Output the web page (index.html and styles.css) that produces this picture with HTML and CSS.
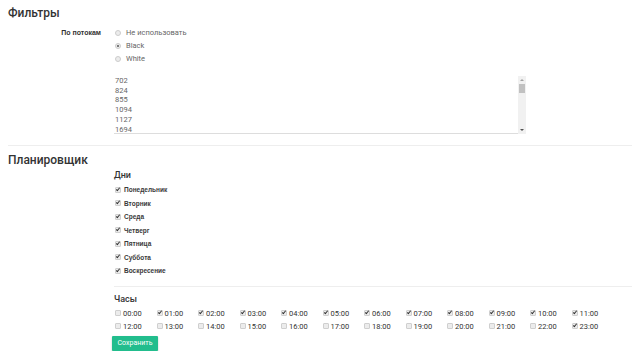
FILE: index.html
```html
<!DOCTYPE html>
<html lang="ru">
  <head>
    <meta charset="UTF-8" />
    <meta name="viewport" content="width=device-width, initial-scale=1.0" />
    <title>Настройки</title>
    <link rel="stylesheet" href="styles.css">
  </head>
  <body>
    <div class="page">
      <h2 class="section-title">Фильтры</h2>
      <div class="form-row">
        <div class="row-label">По потокам</div>
        <div class="row-body">
          <div class="radio-list">
            <label class="radio"><span class="dot"></span>Не использовать</label>
            <label class="radio"><span class="dot on"></span>Black</label>
            <label class="radio"><span class="dot"></span>White</label>
          </div>
          <div class="stream-box">
            <div class="stream-lines">
              <div>702</div>
              <div>824</div>
              <div>855</div>
              <div>1094</div>
              <div>1127</div>
              <div>1694</div>
            </div>
            <div class="scrollbar">
              <span class="arrow up"></span>
              <span class="thumb"></span>
              <span class="track"></span>
              <span class="arrow down"></span>
            </div>
          </div>
        </div>
      </div>

      <hr class="divider" />

      <h2 class="section-title second">Планировщик</h2>
      <div class="form-row">
        <div class="row-label"></div>
        <div class="row-body">
          <h3 class="sub-title">Дни</h3>
          <div class="day-list">
            <label class="day"><span class="box on"></span>Понедельник</label>
            <label class="day"><span class="box on"></span>Вторник</label>
            <label class="day"><span class="box on"></span>Среда</label>
            <label class="day"><span class="box on"></span>Четверг</label>
            <label class="day"><span class="box on"></span>Пятница</label>
            <label class="day"><span class="box on"></span>Суббота</label>
            <label class="day"><span class="box on"></span>Воскресение</label>
          </div>

          <hr class="divider inner" />

          <h3 class="sub-title hours-title">Часы</h3>
          <div class="hour-grid">
            <label class="hour"><span class="box"></span>00:00</label>
            <label class="hour"><span class="box on"></span>01:00</label>
            <label class="hour"><span class="box on"></span>02:00</label>
            <label class="hour"><span class="box on"></span>03:00</label>
            <label class="hour"><span class="box on"></span>04:00</label>
            <label class="hour"><span class="box on"></span>05:00</label>
            <label class="hour"><span class="box on"></span>06:00</label>
            <label class="hour"><span class="box on"></span>07:00</label>
            <label class="hour"><span class="box on"></span>08:00</label>
            <label class="hour"><span class="box on"></span>09:00</label>
            <label class="hour"><span class="box on"></span>10:00</label>
            <label class="hour"><span class="box on"></span>11:00</label>
            <label class="hour"><span class="box"></span>12:00</label>
            <label class="hour"><span class="box"></span>13:00</label>
            <label class="hour"><span class="box"></span>14:00</label>
            <label class="hour"><span class="box"></span>15:00</label>
            <label class="hour"><span class="box"></span>16:00</label>
            <label class="hour"><span class="box"></span>17:00</label>
            <label class="hour"><span class="box"></span>18:00</label>
            <label class="hour"><span class="box"></span>19:00</label>
            <label class="hour"><span class="box"></span>20:00</label>
            <label class="hour"><span class="box"></span>21:00</label>
            <label class="hour"><span class="box"></span>22:00</label>
            <label class="hour"><span class="box on"></span>23:00</label>
          </div>
          <button class="save-btn" type="button">Сохранить</button>
        </div>
      </div>
    </div>
  </body>
</html>
```

FILE: styles.css
```css
body {
  margin: 0;
  padding: 0;
  background-color: #fff;
  font-family: Roboto, "Liberation Sans", sans-serif;
  color: #333;
}
.page {
  padding: 0 8px;
}
.section-title {
  margin: 4px 0 0;
  font-size: 12px;
  line-height: 18px;
  font-weight: 500;
  color: #333;
}
.section-title.second {
  margin-top: 6px;
  line-height: 16px;
}
.form-row {
  display: flex;
}
.row-label {
  width: 93px;
  flex: none;
  padding-right: 13px;
  padding-top: 4px;
  text-align: right;
  font-family: "Liberation Sans", Arial, sans-serif;
  font-size: 7px;
  font-weight: bold;
  line-height: 13px;
  color: #333;
}
.row-body {
  flex: 1;
}
.radio-list {
  display: flex;
  flex-direction: column;
  padding-top: 4px;
}
.radio {
  display: flex;
  align-items: center;
  height: 13px;
  font-size: 7.5px;
  color: #666;
}
.dot {
  width: 4px;
  height: 4px;
  margin: 0 5px 0 1px;
  border: 1px solid #ccc;
  border-radius: 50%;
  background-color: #ececec;
  display: flex;
  align-items: center;
  justify-content: center;
}
.dot.on::after {
  content: "";
  width: 2px;
  height: 2px;
  border-radius: 50%;
  background-color: #555;
}
.stream-box {
  display: flex;
  width: 412px;
  height: 59px;
  margin-top: 10px;
}
.stream-lines {
  flex: 1;
  padding: 1px 0 0 1px;
  font-size: 7.5px;
  line-height: 9.7px;
  color: #666;
  border-bottom: 1px solid #ddd;
  overflow: hidden;
}
.scrollbar {
  width: 8px;
  flex: none;
  display: flex;
  flex-direction: column;
  align-items: center;
  background-color: #f1f1f1;
  margin-top: 1px;
}
.scrollbar .arrow {
  width: 0;
  height: 0;
  margin: 3px 0;
  border-left: 2px solid transparent;
  border-right: 2px solid transparent;
}
.scrollbar .arrow.up {
  border-bottom: 2px solid #a3a3a3;
}
.scrollbar .arrow.down {
  border-top: 2px solid #505050;
}
.scrollbar .thumb {
  width: 6px;
  height: 9px;
  background-color: #c1c1c1;
}
.scrollbar .track {
  flex: 1;
}
.divider {
  border: 0;
  border-top: 1px solid #eee;
  margin: 11px 0 0;
}
.divider.inner {
  margin-top: 8px;
}
.sub-title {
  margin: 1px 0 0;
  font-size: 9px;
  line-height: 12px;
  font-weight: 500;
  color: #333;
}
.hours-title {
  margin-top: 6px;
}
.day-list {
  display: flex;
  flex-direction: column;
  padding-top: 2px;
}
.day {
  display: flex;
  align-items: center;
  height: 13.5px;
  font-family: "Liberation Sans", Arial, sans-serif;
  font-size: 6.5px;
  font-weight: bold;
  color: #3a3a3a;
}
.box {
  width: 4px;
  height: 4px;
  margin: 0 3px 0 1px;
  flex: none;
  border: 1px solid #cfcfcf;
  border-radius: 1px;
  background-color: #ececec;
  position: relative;
}
.box.on::after {
  content: "";
  position: absolute;
  left: 1px;
  top: -1px;
  width: 1px;
  height: 3px;
  border-right: 1px solid #333;
  border-bottom: 1px solid #333;
  transform: rotate(40deg);
}
.hour-grid {
  display: grid;
  grid-template-columns: repeat(12, 41.5px);
  padding-top: 2px;
}
.hour {
  display: flex;
  align-items: center;
  height: 13px;
  font-size: 7.5px;
  color: #333;
}
.hour .box {
  margin-right: 2px;
}
.save-btn {
  display: block;
  margin: 3px 0 0 -2px;
  width: 46px;
  height: 15px;
  padding: 0;
  border: none;
  border-radius: 1px;
  background-color: #22bd8d;
  box-shadow: 0 1px 2px rgba(0, 0, 0, 0.25);
  color: #fff;
  font-family: Roboto, "Liberation Sans", sans-serif;
  font-size: 7px;
  cursor: pointer;
}
```
